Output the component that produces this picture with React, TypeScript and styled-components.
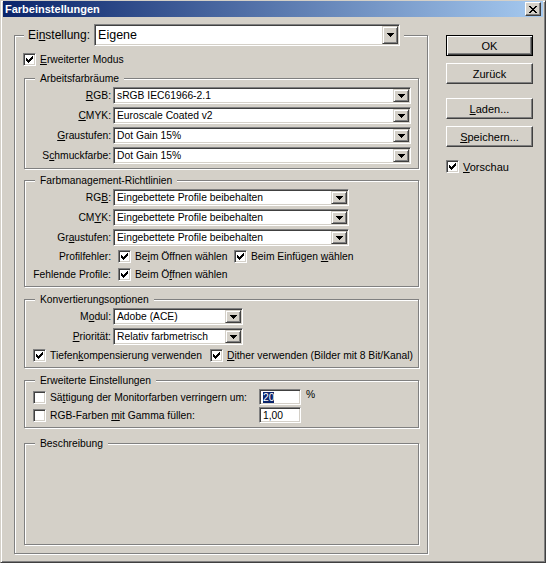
import styled, { createGlobalStyle } from 'styled-components';

const GlobalStyle = createGlobalStyle`
  html, body {
    margin: 0;
    padding: 0;
    background: #d4d0c8;
  }
  body {
    font-family: Tahoma, "Liberation Sans", Arial, sans-serif;
    font-size: 10.3px;
    color: #000;
  }
  u {
    text-underline-offset: 1px;
  }
`;

const Window = styled.div`
  box-sizing: border-box;
  width: 546px;
  height: 563px;
  display: flex;
  flex-direction: column;
  background: #d4d0c8;
  border: 1px solid;
  border-color: #d4d0c8 #404040 #404040 #d4d0c8;
  box-shadow: inset 1px 1px #fff, inset -1px -1px #808080;
  padding: 0 2px 2px 2px;
`;

const TitleBar = styled.div`
  height: 16px;
  display: flex;
  align-items: center;
  justify-content: space-between;
  padding: 0 2px 0 2px;
  background: linear-gradient(to right, #0a246a, #a6caf0);
`;

const TitleText = styled.span`
  color: #fff;
  font-weight: bold;
  font-size: 11px;
`;

const CloseButton = styled.div`
  box-sizing: border-box;
  width: 16px;
  height: 14px;
  display: flex;
  align-items: center;
  justify-content: center;
  background: #d4d0c8;
  border: 1px solid;
  border-color: #fff #404040 #404040 #fff;
  box-shadow: inset -1px -1px #808080;
`;

const Body = styled.div`
  display: flex;
  align-items: flex-start;
  padding: 7px 0 0 11px;
  gap: 18px;
`;

const MainGroup = styled.fieldset`
  box-sizing: border-box;
  width: 414px;
  margin: 0;
  padding: 7px 0 8px 8px;
  border: 1px solid #808080;
  box-shadow: inset 1px 1px #fff, 1px 1px #fff;
  min-inline-size: 0;
`;

const MainLegend = styled.legend`
  display: flex;
  align-items: center;
  gap: 4px;
  margin-left: 1px;
  padding: 0 4px;
  background: #d4d0c8;
`;

const BigLabel = styled.span`
  font-size: 12px;
`;

const Combo = styled.div<{ $w?: number; $big?: boolean }>`
  box-sizing: border-box;
  width: ${(p) => (p.$w ? `${p.$w}px` : '100%')};
  height: ${(p) => (p.$big ? 22 : 17)}px;
  display: flex;
  background: #fff;
  border: 1px solid;
  border-color: #808080 #fff #fff #808080;
  box-shadow: inset 1px 1px #404040, inset -1px -1px #d4d0c8;
  padding: 1px;
  font-size: ${(p) => (p.$big ? '12.5px' : 'inherit')};
`;

const ComboText = styled.span`
  flex: 1;
  display: flex;
  align-items: center;
  padding-left: 2px;
  white-space: nowrap;
  overflow: hidden;
`;

const DropButton = styled.span`
  box-sizing: border-box;
  width: 16px;
  flex: none;
  display: flex;
  align-items: center;
  justify-content: center;
  background: #d4d0c8;
  border: 1px solid;
  border-color: #d4d0c8 #404040 #404040 #d4d0c8;
  box-shadow: inset 1px 1px #fff, inset -1px -1px #808080;
`;

const Group = styled.fieldset<{ $h?: number; $top?: number }>`
  box-sizing: border-box;
  width: 395px;
  margin: ${(p) => p.$top ?? 6}px 0 0 1px;
  padding: 2px 7px 4px 0;
  border: 1px solid #808080;
  box-shadow: inset 1px 1px #fff, 1px 1px #fff;
  min-inline-size: 0;
  ${(p) => (p.$h ? `height: ${p.$h}px;` : '')}
`;

const GroupLegend = styled.legend`
  margin-left: 10px;
  padding: 0 5px;
  line-height: 13px;
  background: #d4d0c8;
`;

const FormGrid = styled.div<{ $gap?: number }>`
  display: grid;
  grid-template-columns: 86px 1fr;
  column-gap: 2px;
  row-gap: ${(p) => p.$gap ?? 3}px;
  align-items: center;
`;

const FieldLabel = styled.span`
  text-align: right;
  white-space: nowrap;
`;

const CheckRow = styled.div<{ $w?: number; $h?: number }>`
  display: flex;
  align-items: center;
  gap: 4px;
  height: ${(p) => p.$h ?? 15}px;
  white-space: nowrap;
  ${(p) => (p.$w ? `width: ${p.$w}px; flex: none;` : '')}
`;

const Line = styled.div<{ $indent?: number; $h?: number }>`
  grid-column: 1 / -1;
  display: flex;
  align-items: center;
  height: ${(p) => p.$h ?? 15}px;
  padding-left: ${(p) => p.$indent ?? 8}px;
`;

const Cell = styled.div<{ $indent?: number }>`
  display: flex;
  align-items: center;
  padding-left: ${(p) => p.$indent ?? 0}px;
`;

const Box = styled.span`
  box-sizing: border-box;
  width: 13px;
  height: 13px;
  flex: none;
  display: flex;
  align-items: center;
  justify-content: center;
  background: #fff;
  border: 1px solid;
  border-color: #808080 #fff #fff #808080;
  box-shadow: inset 1px 1px #404040, inset -1px -1px #d4d0c8;
`;

const TextField = styled.div`
  box-sizing: border-box;
  width: 42px;
  height: 16px;
  display: flex;
  align-items: center;
  padding-left: 3px;
  background: #fff;
  border: 1px solid;
  border-color: #808080 #fff #fff #808080;
  box-shadow: inset 1px 1px #404040, inset -1px -1px #d4d0c8;
`;

const Selected = styled.span`
  background: #0a246a;
  color: #fff;
`;

const Unit = styled.span`
  margin-left: 5px;
  align-self: flex-start;
`;

const Side = styled.div`
  width: 87px;
  display: flex;
  flex-direction: column;
  padding-top: 11px;
`;

const PushButton = styled.div<{ $default?: boolean; $gap?: number }>`
  box-sizing: border-box;
  height: 21px;
  margin-top: ${(p) => p.$gap ?? 0}px;
  display: flex;
  align-items: center;
  justify-content: center;
  background: #d4d0c8;
  font-size: 11px;
  border: 1px solid;
  ${(p) =>
    p.$default
      ? `border-color: #000;
         box-shadow: inset 1px 1px #fff, inset -1px -1px #404040, inset -2px -2px #808080;`
      : `border-color: #fff #404040 #404040 #fff;
         box-shadow: inset -1px -1px #808080;`}
`;

const SideCheck = styled(CheckRow)`
  margin-top: 12px;
  font-size: 11px;
`;

const Check = () => (
  <svg width="7" height="7" viewBox="0 0 7 7" shapeRendering="crispEdges">
    <path
      d="M6 0h1v3h-1zM5 1h1v3h-1zM4 2h1v3h-1zM3 3h1v3h-1zM2 4h1v3h-1zM1 3h1v3h-1zM0 2h1v3h-1z"
      fill="#000"
    />
  </svg>
);

const Arrow = () => (
  <svg width="7" height="4" viewBox="0 0 7 4" shapeRendering="crispEdges">
    <path d="M0 0h7v1h-7zM1 1h5v1h-5zM2 2h3v1h-3zM3 3h1v1h-1z" fill="#000" />
  </svg>
);

const CloseGlyph = () => (
  <svg width="8" height="7" viewBox="0 0 8 7" shapeRendering="crispEdges">
    <path
      d="M0 0h2v1h-2zM6 0h2v1h-2zM1 1h2v1h-2zM5 1h2v1h-2zM2 2h4v1h-4zM3 3h2v1h-2zM2 4h4v1h-4zM1 5h2v1h-2zM5 5h2v1h-2zM0 6h2v1h-2zM6 6h2v1h-2z"
      fill="#000"
    />
  </svg>
);

const CheckBox = ({ checked }: { checked?: boolean }) => <Box>{checked && <Check />}</Box>;

const Select = ({ value, w, big }: { value: string; w?: number; big?: boolean }) => (
  <Combo $w={w} $big={big}>
    <ComboText>{value}</ComboText>
    <DropButton>
      <Arrow />
    </DropButton>
  </Combo>
);

export default function App() {
  return (
    <>
      <GlobalStyle />
      <Window>
        <TitleBar>
          <TitleText>Farbeinstellungen</TitleText>
          <CloseButton>
            <CloseGlyph />
          </CloseButton>
        </TitleBar>
        <Body>
          <MainGroup>
            <MainLegend>
              <BigLabel>
                Ei<u>n</u>stellung:
              </BigLabel>
              <Select value="Eigene" w={306} big />
            </MainLegend>

            <CheckRow $h={13}>
              <CheckBox checked />
              <span>
                <u>E</u>rweiterter Modus
              </span>
            </CheckRow>

            <Group $top={6}>
              <GroupLegend>Arbeitsfarbräume</GroupLegend>
              <FormGrid>
                <FieldLabel>
                  <u>R</u>GB:
                </FieldLabel>
                <Select value="sRGB IEC61966-2.1" />
                <FieldLabel>
                  <u>C</u>MYK:
                </FieldLabel>
                <Select value="Euroscale Coated v2" />
                <FieldLabel>
                  <u>G</u>raustufen:
                </FieldLabel>
                <Select value="Dot Gain 15%" />
                <FieldLabel>
                  S<u>c</u>hmuckfarbe:
                </FieldLabel>
                <Select value="Dot Gain 15%" />
              </FormGrid>
            </Group>

            <Group $top={5}>
              <GroupLegend>Farbmanagement-Richtlinien</GroupLegend>
              <FormGrid>
                <FieldLabel>
                  RG<u>B</u>:
                </FieldLabel>
                <Select value="Eingebettete Profile beibehalten" w={236} />
                <FieldLabel>
                  CM<u>Y</u>K:
                </FieldLabel>
                <Select value="Eingebettete Profile beibehalten" w={236} />
                <FieldLabel>
                  Gr<u>a</u>ustufen:
                </FieldLabel>
                <Select value="Eingebettete Profile beibehalten" w={236} />
                <FieldLabel>Profilfehler:</FieldLabel>
                <Cell $indent={5}>
                  <CheckRow $w={116}>
                    <CheckBox checked />
                    <span>
                      Be<u>i</u>m Öffnen wählen
                    </span>
                  </CheckRow>
                  <CheckRow>
                    <CheckBox checked />
                    <span>
                      Beim Einfügen <u>w</u>ählen
                    </span>
                  </CheckRow>
                </Cell>
                <FieldLabel>Fehlende Profile:</FieldLabel>
                <Cell $indent={5}>
                  <CheckRow>
                    <CheckBox checked />
                    <span>
                      Beim Ö<u>f</u>fnen wählen
                    </span>
                  </CheckRow>
                </Cell>
              </FormGrid>
            </Group>

            <Group $top={6}>
              <GroupLegend>Konvertierungsoptionen</GroupLegend>
              <FormGrid>
                <FieldLabel>
                  M<u>o</u>dul:
                </FieldLabel>
                <Select value="Adobe (ACE)" w={130} />
                <FieldLabel>
                  <u>P</u>riorität:
                </FieldLabel>
                <Select value="Relativ farbmetrisch" w={130} />
                <Line>
                  <CheckRow $w={177}>
                    <CheckBox checked />
                    <span>
                      Tiefen<u>k</u>ompensierung verwenden
                    </span>
                  </CheckRow>
                  <CheckRow>
                    <CheckBox checked />
                    <span>
                      <u>D</u>ither verwenden (Bilder mit 8 Bit/Kanal)
                    </span>
                  </CheckRow>
                </Line>
              </FormGrid>
            </Group>

            <Group $top={6}>
              <GroupLegend>Erweiterte Einstellungen</GroupLegend>
              <FormGrid $gap={2}>
                <Line $h={16}>
                  <CheckRow $w={226}>
                    <CheckBox />
                    <span>
                      Sä<u>t</u>tigung der Monitorfarben verringern um:
                    </span>
                  </CheckRow>
                  <TextField>
                    <Selected>20</Selected>
                  </TextField>
                  <Unit>%</Unit>
                </Line>
                <Line $h={16}>
                  <CheckRow $w={226}>
                    <CheckBox />
                    <span>
                      RGB-Farben <u>m</u>it Gamma füllen:
                    </span>
                  </CheckRow>
                  <TextField>1,00</TextField>
                </Line>
              </FormGrid>
            </Group>

            <Group $top={9} $h={108}>
              <GroupLegend>Beschreibung</GroupLegend>
            </Group>
          </MainGroup>

          <Side>
            <PushButton $default>OK</PushButton>
            <PushButton $gap={7}>Zurück</PushButton>
            <PushButton $gap={14}>
              <span>
                <u>L</u>aden...
              </span>
            </PushButton>
            <PushButton $gap={7}>
              <span>
                <u>S</u>peichern...
              </span>
            </PushButton>
            <SideCheck>
              <CheckBox checked />
              <span>
                <u>V</u>orschau
              </span>
            </SideCheck>
          </Side>
        </Body>
      </Window>
    </>
  );
}
